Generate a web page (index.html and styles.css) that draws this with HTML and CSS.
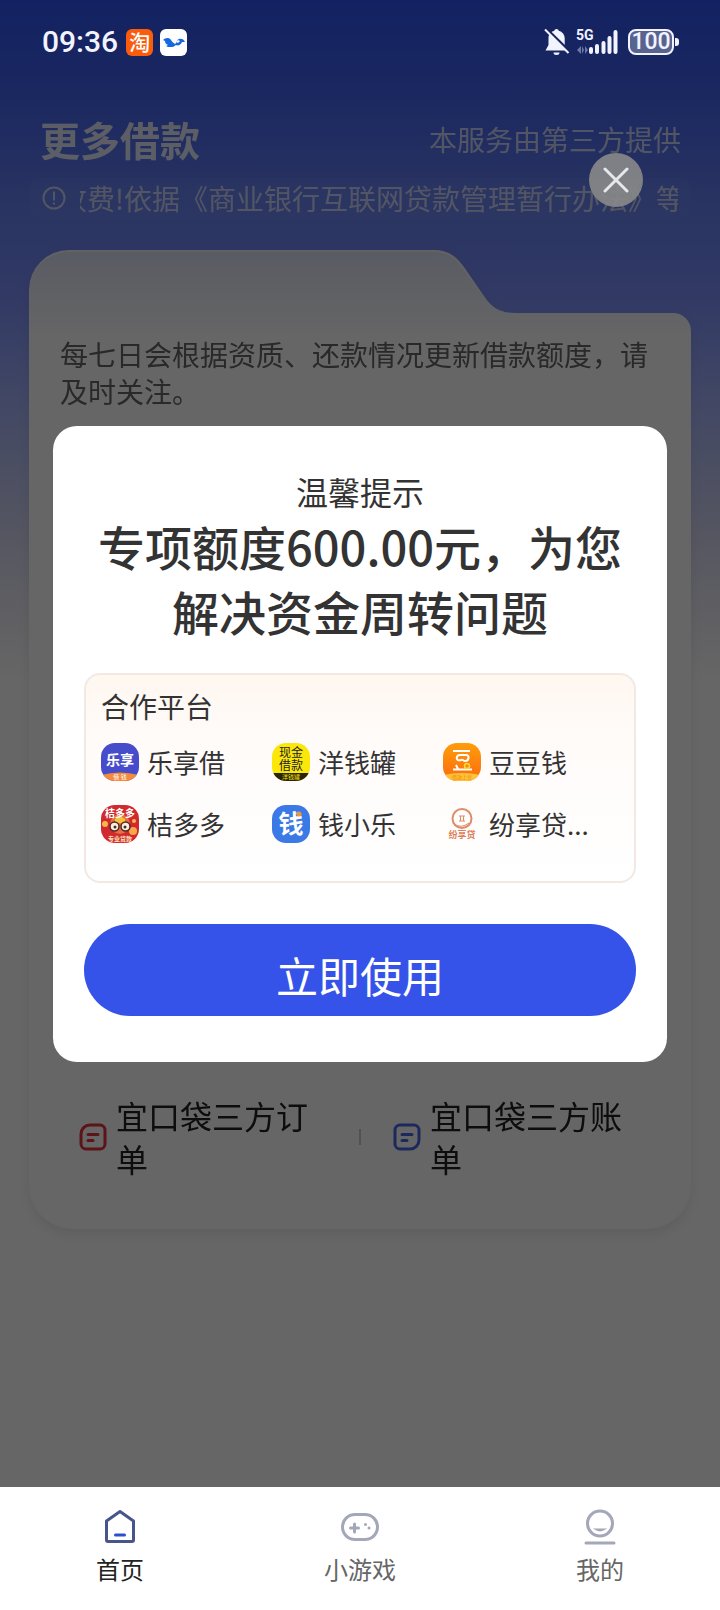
FILE: index.html
```html
<!DOCTYPE html>
<html lang="zh-CN">
<head>
<meta charset="utf-8">
<meta name="viewport" content="width=device-width, initial-scale=1">
<title>更多借款</title>
<link rel="stylesheet" href="styles.css">
</head>
<body>
<div class="app">
  <div class="screen">
    <div class="status">
      <span class="time">09:36</span>
      <span class="chip chip-orange">淘</span>
      <span class="chip chip-white">
        <svg width="27" height="27" viewBox="0 0 27 27" aria-hidden="true"><path d="M3 11c2-2 6-3 8 0 1 2 3 3 4 4 2-1 1-4 4-5 2-1 5 0 6 3l-3 0c-1 3-4 4-6 3-2 1-2 2-4 2-3 0-5 0-6-1l2-1c-2-1-3-2-3-4z" fill="#1668e0"/><path d="M16 13c1-2 3-2 4-1l-2 2z" fill="#fff"/></svg>
      </span>
      <span class="status-gap"></span>
      <svg class="bell" width="26" height="28" viewBox="0 0 26 28" aria-hidden="true"><path d="M12.500 1c1.200 0 2 .8 2.200 1.800 3.800 1 6 4 6 7.700v6.500l3 5.500H1.500l3-5.500v-6.500c0-3.700 2.200-6.700 5.800-7.700.200-1 1-1.800 2.200-1.800z" fill="#f1f3ff"/><path d="M9.500 24.500h6a3 2.500 0 0 1-6 0z" fill="#f1f3ff"/><path d="M2 .500 26 24" stroke="#17245f" stroke-width="3"/><path d="M1 1.500 24.500 25" stroke="#f1f3ff" stroke-width="2"/></svg>
      <span class="signal">
        <span class="net">5G</span>
        <svg width="42" height="28" viewBox="0 0 42 28" aria-hidden="true"><g stroke="#f1f3ff" stroke-width="4" stroke-linecap="round"><path d="M15 21v3M21 18v6M27.500 15v9M33.500 10v14M39.500 4v20"/></g><path d="M1 22l4-4v8zM6 18v8l2-4zM12 22l-3-4v8z" fill="#6d78a8"/></svg>
      </span>
      <span class="battery"><span class="battery-level">100</span></span>
    </div>

    <header class="head">
      <h1>更多借款</h1>
      <p>本服务由第三方提供</p>
    </header>

    <div class="notice">
      <svg width="24" height="24" viewBox="0 0 24 24" fill="none" stroke="#fff" stroke-width="2" aria-hidden="true"><circle cx="12" cy="12" r="10.500"/><path d="M12 5.500v9M12 16.500v2"/></svg>
      <div class="marquee"><span>收费!依据《商业银行互联网贷款管理暂行办法》等</span></div>
    </div>

    <main class="card">
      <div class="tab">
        <div class="tab-flat"></div>
        <svg class="tab-slope" width="82" height="63" viewBox="0 0 82 63" aria-hidden="true">
          <defs><linearGradient id="slope" x1="0" y1="0" x2="0" y2="1"><stop offset="0" stop-color="#e0e5f8"/><stop offset="1" stop-color="#f6f7fd"/></linearGradient></defs>
          <path d="M0 0C16 0 24 7 31 17L51 46C58 57 67 63 82 63H0z" fill="url(#slope)"/>
          <path d="M0 1C15 1 23 8 30 18L50 47C56 57 62 62 72 63" fill="none" stroke="#f2f4fd" stroke-width="2"/>
        </svg>
      </div>
      <div class="card-body">
        <p class="tip">每七日会根据资质、还款情况更新借款额度，请及时关注。</p>
        <div class="links">
          <a class="link" href="#orders">
            <svg width="28" height="28" viewBox="0 0 28 28" fill="none" stroke="#e8303e" stroke-width="3" stroke-linecap="round" aria-hidden="true"><path d="M11 2h10a5 5 0 0 1 5 5v14a5 5 0 0 1-5 5H7a5 5 0 0 1-5-5V11a9 9 0 0 1 9-9z"/><path d="M9 11.500h10M9 17.500h5"/></svg>
            <span>宜口袋三方订单</span>
          </a>
          <span class="divider"></span>
          <a class="link" href="#bills">
            <svg width="28" height="28" viewBox="0 0 28 28" fill="none" stroke="#4a68e8" stroke-width="3" stroke-linecap="round" aria-hidden="true"><path d="M7 2h14a5 5 0 0 1 5 5v10a9 9 0 0 1-9 9H7a5 5 0 0 1-5-5V7a5 5 0 0 1 5-5z"/><path d="M9 11.500h10M9 17.500h5"/></svg>
            <span>宜口袋三方账单</span>
          </a>
        </div>
      </div>
    </main>

    <div class="overlay">
      <button class="close" type="button" aria-label="关闭">
        <svg width="26" height="26" viewBox="0 0 26 26" stroke="#e6e7ea" stroke-width="3" stroke-linecap="round" aria-hidden="true"><path d="M2 2l22 22M24 2 2 24"/></svg>
      </button>
      <section class="dialog" role="dialog" aria-labelledby="dialog-title">
        <p class="dialog-label">温馨提示</p>
        <h2 id="dialog-title">专项额度600.00元，为您解决资金周转问题</h2>
        <div class="partners">
          <h3>合作平台</h3>
          <ul>
            <li>
              <svg class="logo" viewBox="0 0 38 38" aria-hidden="true"><rect width="38" height="38" fill="#474ccb"/><path d="M0 32q19-5 38 0v6H0z" fill="#f58a3c"/><text x="19" y="22" class="lt" font-size="14" font-weight="700" fill="#fff">乐享</text><text x="19" y="36" class="lt" font-size="6" fill="#fff">借 钱</text></svg>
              <span>乐享借</span>
            </li>
            <li>
              <svg class="logo" viewBox="0 0 38 38" aria-hidden="true"><rect width="38" height="38" fill="#fbe70a"/><path d="M0 30h38v8H0z" fill="#29250c"/><text x="19" y="14" class="lt" font-size="12" fill="#222">现金</text><text x="19" y="27" class="lt" font-size="12" fill="#222">借款</text><text x="19" y="36" class="lt" font-size="6" fill="#fbe70a">洋钱罐</text></svg>
              <span>洋钱罐</span>
            </li>
            <li>
              <svg class="logo" viewBox="0 0 38 38" aria-hidden="true"><defs><linearGradient id="bean" x1="0" y1="0" x2="0" y2="1"><stop offset="0" stop-color="#ff9d0a"/><stop offset="1" stop-color="#fb6a10"/></linearGradient></defs><rect width="38" height="38" fill="url(#bean)"/><path d="M0 32q19-4 38 0v6H0z" fill="#ffc234"/><g fill="none" stroke="#fff" stroke-width="2"><path d="M10 8h17M10 26.500h19M13 22l2 4"/><path d="M17 12h6c4 0 3 6-1 6-2 0-2-2-4-1-5 2-6-5-1-5z"/></g><circle cx="24" cy="23" r="2.500" fill="#fb8a10" stroke="#ffda3a" stroke-width="1.500"/><text x="19" y="36" class="lt" font-size="5" fill="#ef8416">借款上豆</text></svg>
              <span>豆豆钱</span>
            </li>
            <li>
              <svg class="logo" viewBox="0 0 38 38" aria-hidden="true"><rect width="38" height="38" fill="#d02a2e"/><circle cx="19" cy="19" r="10" fill="#e8703f"/><circle cx="4" cy="19" r="3" fill="#f7b84b"/><circle cx="32" cy="26" r="4" fill="#f7a84b"/><circle cx="33" cy="16" r="2" fill="#f7b84b"/><path d="M14 14l5-3 5 3v4H14z" fill="#f5c13d"/><g fill="#fff0dc" stroke="#54262a" stroke-width="1.500"><circle cx="13.500" cy="21.500" r="4.500"/><circle cx="24.500" cy="21.500" r="4.500"/></g><circle cx="14" cy="22" r="1.500" fill="#333"/><circle cx="24" cy="22" r="1.500" fill="#333"/><text x="19" y="12" class="lt" font-size="10" font-weight="700" fill="#fff">桔多多</text><text x="19" y="36" class="lt" font-size="6" font-weight="700" fill="#ffe2bd">专业贷款</text></svg>
              <span>桔多多</span>
            </li>
            <li>
              <svg class="logo" viewBox="0 0 38 38" aria-hidden="true"><rect width="38" height="38" fill="#3b7ae6"/><text x="19" y="28" class="lt" font-size="25" font-weight="700" fill="#fff">钱</text><circle cx="27" cy="9" r="2.500" fill="#e89a38"/></svg>
              <span>钱小乐</span>
            </li>
            <li>
              <svg class="logo" viewBox="0 0 38 38" aria-hidden="true"><circle cx="19" cy="13.500" r="9.500" fill="none" stroke="#dd8c68" stroke-width="2"/><path d="M11 19q7 5 15-1" fill="none" stroke="#dd8c68"/><path d="M16 11h6M16 16h6M17.500 11v5M20.500 11v5" stroke="#dd8c68" fill="none"/><text x="19" y="33" class="lt" font-size="9" font-weight="700" fill="#dd805a">纷享贷</text></svg>
              <span>纷享贷...</span>
            </li>
          </ul>
        </div>
        <button class="primary" type="button">立即使用</button>
      </section>
    </div>
  </div>

  <nav class="nav">
    <a class="active" href="#home">
      <svg width="40" height="40" viewBox="0 0 40 40" fill="none" stroke-linecap="round" stroke-linejoin="round" aria-hidden="true"><path d="M6.500 16 20 6.500 33.500 16v19a1.500 1.500 0 0 1-1.500 1.500H8A1.500 1.500 0 0 1 6.500 35z" stroke="#46558a" stroke-width="3"/><path d="M15.500 30h9" stroke="#2a50cf" stroke-width="3"/></svg>
      <span>首页</span>
    </a>
    <a href="#games">
      <svg width="40" height="40" viewBox="0 0 40 40" fill="none" stroke="#a3a7b9" stroke-width="3" stroke-linecap="round" aria-hidden="true"><rect x="2.500" y="9.500" width="35" height="25" rx="12.500"/><path d="M14.500 19v8M10.500 23h8"/><path d="M25.500 19.500v.100M29 23v.100"/></svg>
      <span>小游戏</span>
    </a>
    <a href="#mine">
      <svg width="40" height="40" viewBox="0 0 40 40" fill="none" stroke="#a3a7b9" stroke-width="3" stroke-linecap="round" aria-hidden="true"><circle cx="20" cy="18.500" r="12.500"/><path d="M6 38h28"/><path d="M16.500 24.500h7q-3.500 2-7 0z" stroke-width="2"/></svg>
      <span>我的</span>
    </a>
  </nav>
</div>
</body>
</html>
```

FILE: styles.css
```css
* { box-sizing: border-box; }

body, h1, h2, h3, p, ul { margin: 0; padding: 0; }

body {
  font-family: "Noto Sans CJK SC", "Noto Sans", sans-serif;
  color: #333;
}

a { color: inherit; text-decoration: none; }
button { border: 0; font: inherit; cursor: pointer; }
svg { display: block; flex: none; }

.app {
  min-height: 100vh;
  display: flex;
  flex-direction: column;
}

.screen {
  position: relative;
  flex: 1;
  background: linear-gradient(#3054f5 0, #3f60f0 80px, #6781f4 200px, #7b90fb 290px, #889cfd 330px, #afbbf8 430px, #d2d5f2 530px, #ebebf6 600px, #fff 680px);
}

/* Status bar */
.status {
  position: relative;
  z-index: 2;
  display: flex;
  align-items: center;
  height: 84px;
  padding: 0 41px 0 42px;
  color: #f1f3ff;
}
.time { font: 500 30px/30px Roboto, sans-serif; margin-right: 8px; }
.chip {
  width: 27px;
  height: 27px;
  border-radius: 6px;
  margin-right: 7px;
  font-size: 21px;
  line-height: 25px;
  text-align: center;
}
.chip-orange { background: #fb5c0c; color: #fff; font-weight: 500; }
.chip-white { background: #fff; }
.status-gap { flex: 1; }
.bell { margin-right: 6px; }
.signal { position: relative; margin-right: 10px; }
.net {
  position: absolute;
  top: 0;
  left: 0;
  font: 700 14px/14px Roboto, sans-serif;
}
.battery {
  position: relative;
  width: 46px;
  height: 26px;
  border: 2px solid #f1f3ff;
  border-radius: 8px;
  background: #59638f;
  margin-right: 5px;
}
.battery::after {
  content: "";
  position: absolute;
  top: 7px;
  right: -7px;
  width: 4px;
  height: 8px;
  border-radius: 0 3px 3px 0;
  background: #f1f3ff;
}
.battery-level {
  display: block;
  font: 500 23px/22px Roboto, sans-serif;
  text-align: center;
}

/* Header */
.head {
  display: flex;
  align-items: center;
  justify-content: space-between;
  height: 88px;
  padding: 22px 39px 0 40px;
  color: #fff;
}
.head h1 { font-size: 40px; line-height: 60px; font-weight: 700; opacity: .85; }
.head p { font-size: 28px; line-height: 40px; opacity: .7; }

.notice {
  display: flex;
  align-items: center;
  gap: 14px;
  height: 40px;
  margin: 6px 30px 0;
  padding: 0 12px;
  border-radius: 8px;
  background: rgba(255, 255, 255, .04);
  color: #fff;
}
.notice svg { opacity: .65; }
.marquee {
  flex: 1;
  display: flex;
  justify-content: flex-end;
  overflow: hidden;
  font-size: 28px;
  line-height: 36px;
  white-space: nowrap;
  opacity: .65;
}
.marquee span { margin-right: -6px; }

/* Folder card */
.card {
  margin: 32px 29px 0;
  filter: drop-shadow(0 5px 6px rgba(60, 60, 80, .1));
}
.tab { display: flex; height: 63px; padding-right: 176px; }
.tab-flat {
  flex: 1;
  border-top: 2px solid #f2f4fd;
  border-left: 1px solid #f2f4fd;
  border-radius: 40px 0 0 0;
  background: linear-gradient(#e0e5f8, #f6f7fd);
}
.card-body {
  display: flex;
  flex-direction: column;
  justify-content: space-between;
  min-height: 916px;
  padding: 23px 31px 49px;
  border-radius: 0 18px 44px 44px;
  background: linear-gradient(#f6f7fd, #fff 24px);
}
.tip { font-size: 28px; line-height: 37px; color: #666; }
.links {
  display: flex;
  align-items: center;
  padding-left: 19px;
}
.link {
  flex: 1;
  display: flex;
  align-items: center;
  gap: 9px;
  font-size: 32px;
  line-height: 43px;
  color: #222;
}
.link span { max-width: 210px; }
.link:first-child { flex: 0 0 280px; }
.divider { width: 2px; height: 16px; margin-right: 32px; background: #ccc; }

/* Dialog */
.overlay {
  position: absolute;
  inset: 0;
  padding: 426px 53px 0;
  background: rgba(0, 0, 0, .6);
}
.close {
  position: absolute;
  top: 153px;
  right: 77px;
  width: 54px;
  height: 54px;
  border-radius: 50%;
  padding: 14px;
  background: rgba(136, 138, 138, .9);
}
.dialog {
  padding: 41px 31px 46px;
  border-radius: 24px;
  background: #fff;
  text-align: center;
}
.dialog-label { font-size: 32px; line-height: 48px; }
.dialog h2 { margin-top: -2px; font-size: 47px; line-height: 65px; font-weight: 500; }
.partners {
  margin-top: 30px;
  padding: 13px 15px 38px;
  border: 2px solid #f2e9e5;
  border-radius: 16px;
  background: linear-gradient(#fff7f0, #fffbf9 30%, #fff);
  text-align: left;
}
.partners h3 { font-size: 28px; line-height: 36px; font-weight: 400; }
.partners ul {
  display: grid;
  grid-template-columns: repeat(3, 1fr);
  row-gap: 24px;
  margin-top: 19px;
  padding-right: 5px;
  list-style: none;
}
.partners li {
  display: flex;
  align-items: center;
  gap: 8px;
  font-size: 26px;
  line-height: 38px;
  white-space: nowrap;
}
.logo { width: 38px; height: 38px; border-radius: 14px; }
.lt { text-anchor: middle; }
.primary {
  display: block;
  width: 100%;
  height: 92px;
  margin-top: 41px;
  padding: 10px 0 0;
  border-radius: 46px;
  background: #3553e9;
  color: #fff;
  font-size: 42px;
  line-height: 60px;
}

/* Bottom navigation */
.nav {
  display: flex;
  height: 123px;
  background: #fff;
}
.nav a {
  flex: 1;
  display: flex;
  flex-direction: column;
  align-items: center;
  padding-top: 18px;
  font-size: 24px;
  line-height: 36px;
  color: #666;
}
.nav span { margin-top: 6px; }
.nav .active { color: #222; }
```
